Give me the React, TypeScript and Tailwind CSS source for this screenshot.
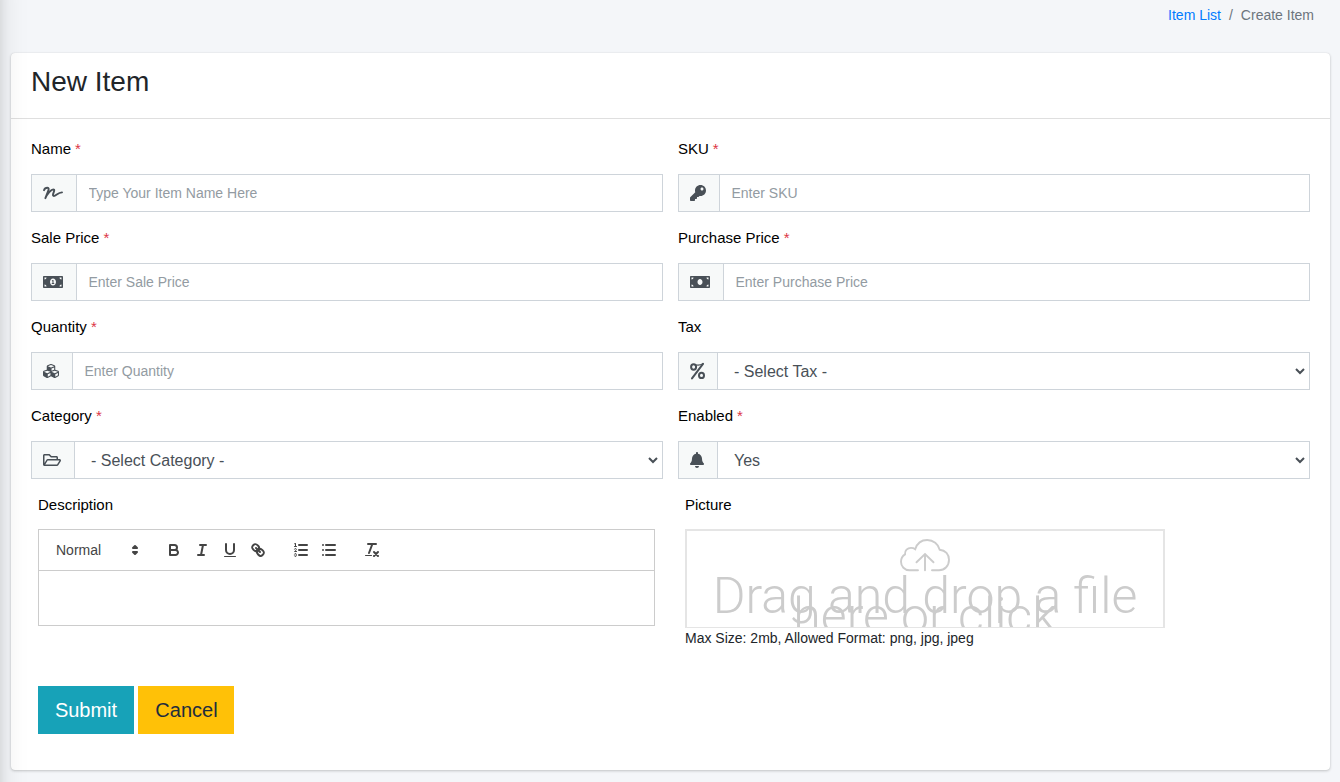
import type { ReactNode } from "react";
import {
  FaBell,
  FaCubes,
  FaKey,
  FaMoneyBill,
  FaMoneyBillAlt,
  FaRegFolderOpen,
} from "react-icons/fa";

type FieldProps = {
  label: string;
  required?: boolean;
  icon: ReactNode;
  addon: string;
  placeholder?: string;
  option?: string;
};

function SignatureIcon() {
  return (
    <svg viewBox="0 0 20 16" className="h-4 w-5" fill="none" stroke="currentColor" strokeWidth="1.9" strokeLinecap="round" strokeLinejoin="round">
      <path d="M1 5.2C1.5 3.6 2.8 2.8 4.4 2.8C6 2.8 5.8 4.2 5.3 5.6L2.4 13.2C4.2 9 8.2 4.4 10.3 4.4C12 4.4 10.9 6.6 10.3 8.4C9.7 10.2 9.9 11.2 11.4 10.9C13.6 10.3 15 7.8 19 7.4" />
    </svg>
  );
}

function PercentIcon() {
  return (
    <svg viewBox="0 0 15 18" className="h-[18px] w-[15px] shrink-0" fill="none" stroke="currentColor" strokeWidth="2" strokeLinecap="round">
      <ellipse cx="3.6" cy="5" rx="2.5" ry="2.7" />
      <ellipse cx="11.5" cy="13.4" rx="2.5" ry="2.7" />
      <path d="M13 1.8L2 16.4" />
      <path d="M5 2.7C8 3.6 10.5 3.2 13 1.8" strokeWidth="1.2" />
    </svg>
  );
}

function Field({ label, required, icon, addon, placeholder, option }: FieldProps) {
  return (
    <div className="h-[89px]">
      <label className="flex h-[38px] items-start gap-1 pt-px text-[15px] leading-[24px] text-black">
        {label}
        {required && <span className="text-[#dc3545]">*</span>}
      </label>
      <div className="flex h-[38px] border border-[#ced4da]">
        <span
          className={`flex shrink-0 items-center justify-center border-r border-[#ced4da] bg-[#f7f9f9] pr-0.5 text-base text-[#495057] ${addon}`}
        >
          {icon}
        </span>
        {option ? (
          <select className="mr-px min-w-0 flex-1 bg-white px-3 text-base text-[#495057] outline-none">
            <option>{option}</option>
          </select>
        ) : (
          <input
            className="min-w-0 flex-1 bg-white px-[11.5px] text-[14px] text-[#495057] outline-none placeholder:text-[#939ba2]"
            placeholder={placeholder}
          />
        )}
      </div>
    </div>
  );
}

function ToolIcon({ children }: { children: ReactNode }) {
  return (
    <button type="button" className="flex h-6 w-7 items-center justify-center">
      <svg viewBox="0 0 18 18" className="size-[18px]" fill="none" stroke="#444" strokeWidth="2" strokeLinecap="round" strokeLinejoin="round">
        {children}
      </svg>
    </button>
  );
}

function Editor() {
  return (
    <div className="h-[97px] border border-[#ccc]">
      <div className="flex h-[41px] items-center border-b border-[#ccc] px-2">
        <div className="mr-[15px] flex h-6 w-[98px] items-center justify-between pl-[9px] pr-px text-[14px] text-[#444]">
          <span>Normal</span>
          <svg viewBox="0 0 18 18" className="size-[18px]" fill="#444" stroke="#444" strokeWidth="2" strokeLinecap="round" strokeLinejoin="round">
            <polygon points="7 11 9 13 11 11" />
            <polygon points="7 7 9 5 11 7" />
          </svg>
        </div>
        <div className="mr-[15px] flex">
          <ToolIcon>
            <path d="M5,4H9.5A2.5,2.5,0,0,1,12,6.5v0A2.5,2.5,0,0,1,9.5,9H5V4Z" />
            <path d="M5,9h5.5A2.5,2.5,0,0,1,13,11.5v0A2.5,2.5,0,0,1,10.5,14H5V9Z" />
          </ToolIcon>
          <ToolIcon>
            <path d="M7 4H13M5 14H11M8 14L10 4" />
          </ToolIcon>
          <ToolIcon>
            <path d="M5,3V9a4.012,4.012,0,0,0,4,4H9a4.012,4.012,0,0,0,4-4V3" />
            <rect x="3" y="15" width="12" height="1" rx="0.5" fill="#444" stroke="none" />
          </ToolIcon>
          <ToolIcon>
            <path d="M7 7L11 11" />
            <path d="M8.9,4.577a3.476,3.476,0,0,1,.36,4.679A3.476,3.476,0,0,1,4.577,8.9C3.185,7.5,2.035,6.4,4.217,4.217S7.5,3.185,8.9,4.577Z" />
            <path d="M13.423,9.1a3.476,3.476,0,0,0-4.679-.36,3.476,3.476,0,0,0,.36,4.679c1.392,1.392,2.5,2.542,4.679.36S14.815,10.5,13.423,9.1Z" />
          </ToolIcon>
        </div>
        <div className="mr-[15px] flex">
          <ToolIcon>
            <path d="M7 4H15M7 9H15M7 14H15" />
            <path d="M2.5 5.5H4.5" strokeWidth="1" />
            <path
              fill="#444"
              stroke="none"
              d="M3.5,6A0.5,0.5,0,0,1,3,5.5V3.085l-0.276.138A0.5,0.5,0,0,1,2.053,3c-0.124-.247-0.023-0.324.224-0.447l1-.5A0.5,0.5,0,0,1,4,2.5v3A0.5,0.5,0,0,1,3.5,6Z"
            />
            <path strokeWidth="1" d="M4.5,10.5h-2c0-.234,1.85-1.076,1.85-2.234A0.959,0.959,0,0,0,2.5,8.156" />
            <path
              strokeWidth="1"
              d="M2.5,14.846a0.959,0.959,0,0,0,1.85-.109A0.7,0.7,0,0,0,3.75,14a0.688,0.688,0,0,0,.6-0.736,0.959,0.959,0,0,0-1.85-.109"
            />
          </ToolIcon>
          <ToolIcon>
            <path d="M6 4H15M6 9H15M6 14H15M3 4H3M3 9H3M3 14H3" />
          </ToolIcon>
        </div>
        <ToolIcon>
          <path d="M5 3H13M6 12L9.35 3M11 11L15 15M15 11L11 15" />
          <rect x="2" y="14" width="7" height="1" rx="0.5" fill="#444" stroke="none" />
        </ToolIcon>
      </div>
    </div>
  );
}

function DropZone() {
  return (
    <div className="flex h-[99px] w-[480px] flex-col items-center overflow-hidden border-2 border-b border-[#e5e5e5] bg-white pt-2 text-[#ccc]">
      <svg viewBox="0 0 50 33" className="h-[33px] w-[50px] shrink-0" fill="none" stroke="#ccc" strokeWidth="1.9" strokeLinecap="round">
        <path d="M18 31.2H9.5C4.5 31.2 1 27.4 1 22.8C1 19.3 2.5 17 5 15.4C4.6 11.5 7.5 8.9 11 8.9C12.7 8.9 14 9.3 15.2 10.2C17 4.5 21.5 1 27.2 1C33.3 1 38.4 5 39.7 10.7C45.5 11.2 49 15.6 49 20.8C49 26.8 44.8 31.2 39 31.2H32" />
        <path d="M25 31.2V15M16.5 23.3L25 15L33.5 23.3" />
      </svg>
      <p className="mt-[14px] w-[460px] shrink-0 text-center font-['Roboto'] text-[50px] leading-[20px] font-light">
        Drag and drop a file here or click
      </p>
    </div>
  );
}

export default function App() {
  return (
    <div className="relative h-[782px] w-full overflow-hidden bg-[#f4f6f9] pl-[11px] pr-[10px] font-['Liberation_Sans',Arial,sans-serif] text-[#212529]">
      <nav className="flex h-[53px] justify-end gap-2 pr-4 pt-[5px] text-[14px] leading-[21px]">
        <a className="text-[#007bff]">Item List</a>
        <span className="text-[#6c757d]">/</span>
        <span className="text-[#6c757d]">Create Item</span>
      </nav>
      <main className="h-[717px] rounded-[4px] bg-white shadow-[0_0_1px_rgba(0,0,0,0.125),0_1px_3px_rgba(0,0,0,0.2)]">
        <header className="h-[66px] border-b border-[#dfdfdf] px-5 pt-3">
          <h1 className="text-[28px] leading-[34px]">New Item</h1>
        </header>
        <form className="px-5 pt-[17px]">
          <div className="grid grid-cols-2 gap-x-[15px]">
            <Field label="Name" required icon={<SignatureIcon />} addon="w-[45px]" placeholder="Type Your Item Name Here" />
            <Field label="SKU" required icon={<FaKey className="size-4" />} addon="w-[41px]" placeholder="Enter SKU" />
            <Field label="Sale Price" required icon={<FaMoneyBillAlt className="h-4 w-5" />} addon="w-[45px]" placeholder="Enter Sale Price" />
            <Field label="Purchase Price" required icon={<FaMoneyBill className="h-4 w-5" />} addon="w-[45px]" placeholder="Enter Purchase Price" />
            <Field label="Quantity" required icon={<FaCubes className="size-4" />} addon="w-[41px]" placeholder="Enter Quantity" />
            <Field label="Tax" icon={<PercentIcon />} addon="w-[39px]" option="- Select Tax -" />
            <Field label="Category" required icon={<FaRegFolderOpen className="h-4 w-[18px]" />} addon="w-[43px]" option="- Select Category -" />
            <Field label="Enabled" required icon={<FaBell className="h-4 w-3.5" />} addon="w-[39px]" option="Yes" />
          </div>
          <div className="grid h-[194px] grid-cols-2 gap-x-[15px]">
            <div className="pl-[7px] pr-2">
              <div className="h-[37px] pt-px text-[15px] leading-[24px] text-black">Description</div>
              <Editor />
            </div>
            <div className="pl-[7px]">
              <div className="h-[37px] pt-px text-[15px] leading-[24px] text-black">Picture</div>
              <DropZone />
              <p className="text-[14px] leading-[21px]">Max Size: 2mb, Allowed Format: png, jpg, jpeg</p>
            </div>
          </div>
          <div className="flex gap-1 pl-[7px] text-[20px]">
            <button type="button" className="h-12 w-24 bg-[#17a2b8] text-white">Submit</button>
            <button type="button" className="h-12 w-24 bg-[#ffc107] pl-px text-[#1f2d3d]">Cancel</button>
          </div>
        </form>
      </main>
      <div className="pointer-events-none absolute -top-10 right-full h-[900px] w-[250px] shadow-[0_14px_28px_rgba(0,0,0,0.12),0_10px_10px_rgba(0,0,0,0.09)]" />
    </div>
  );
}
